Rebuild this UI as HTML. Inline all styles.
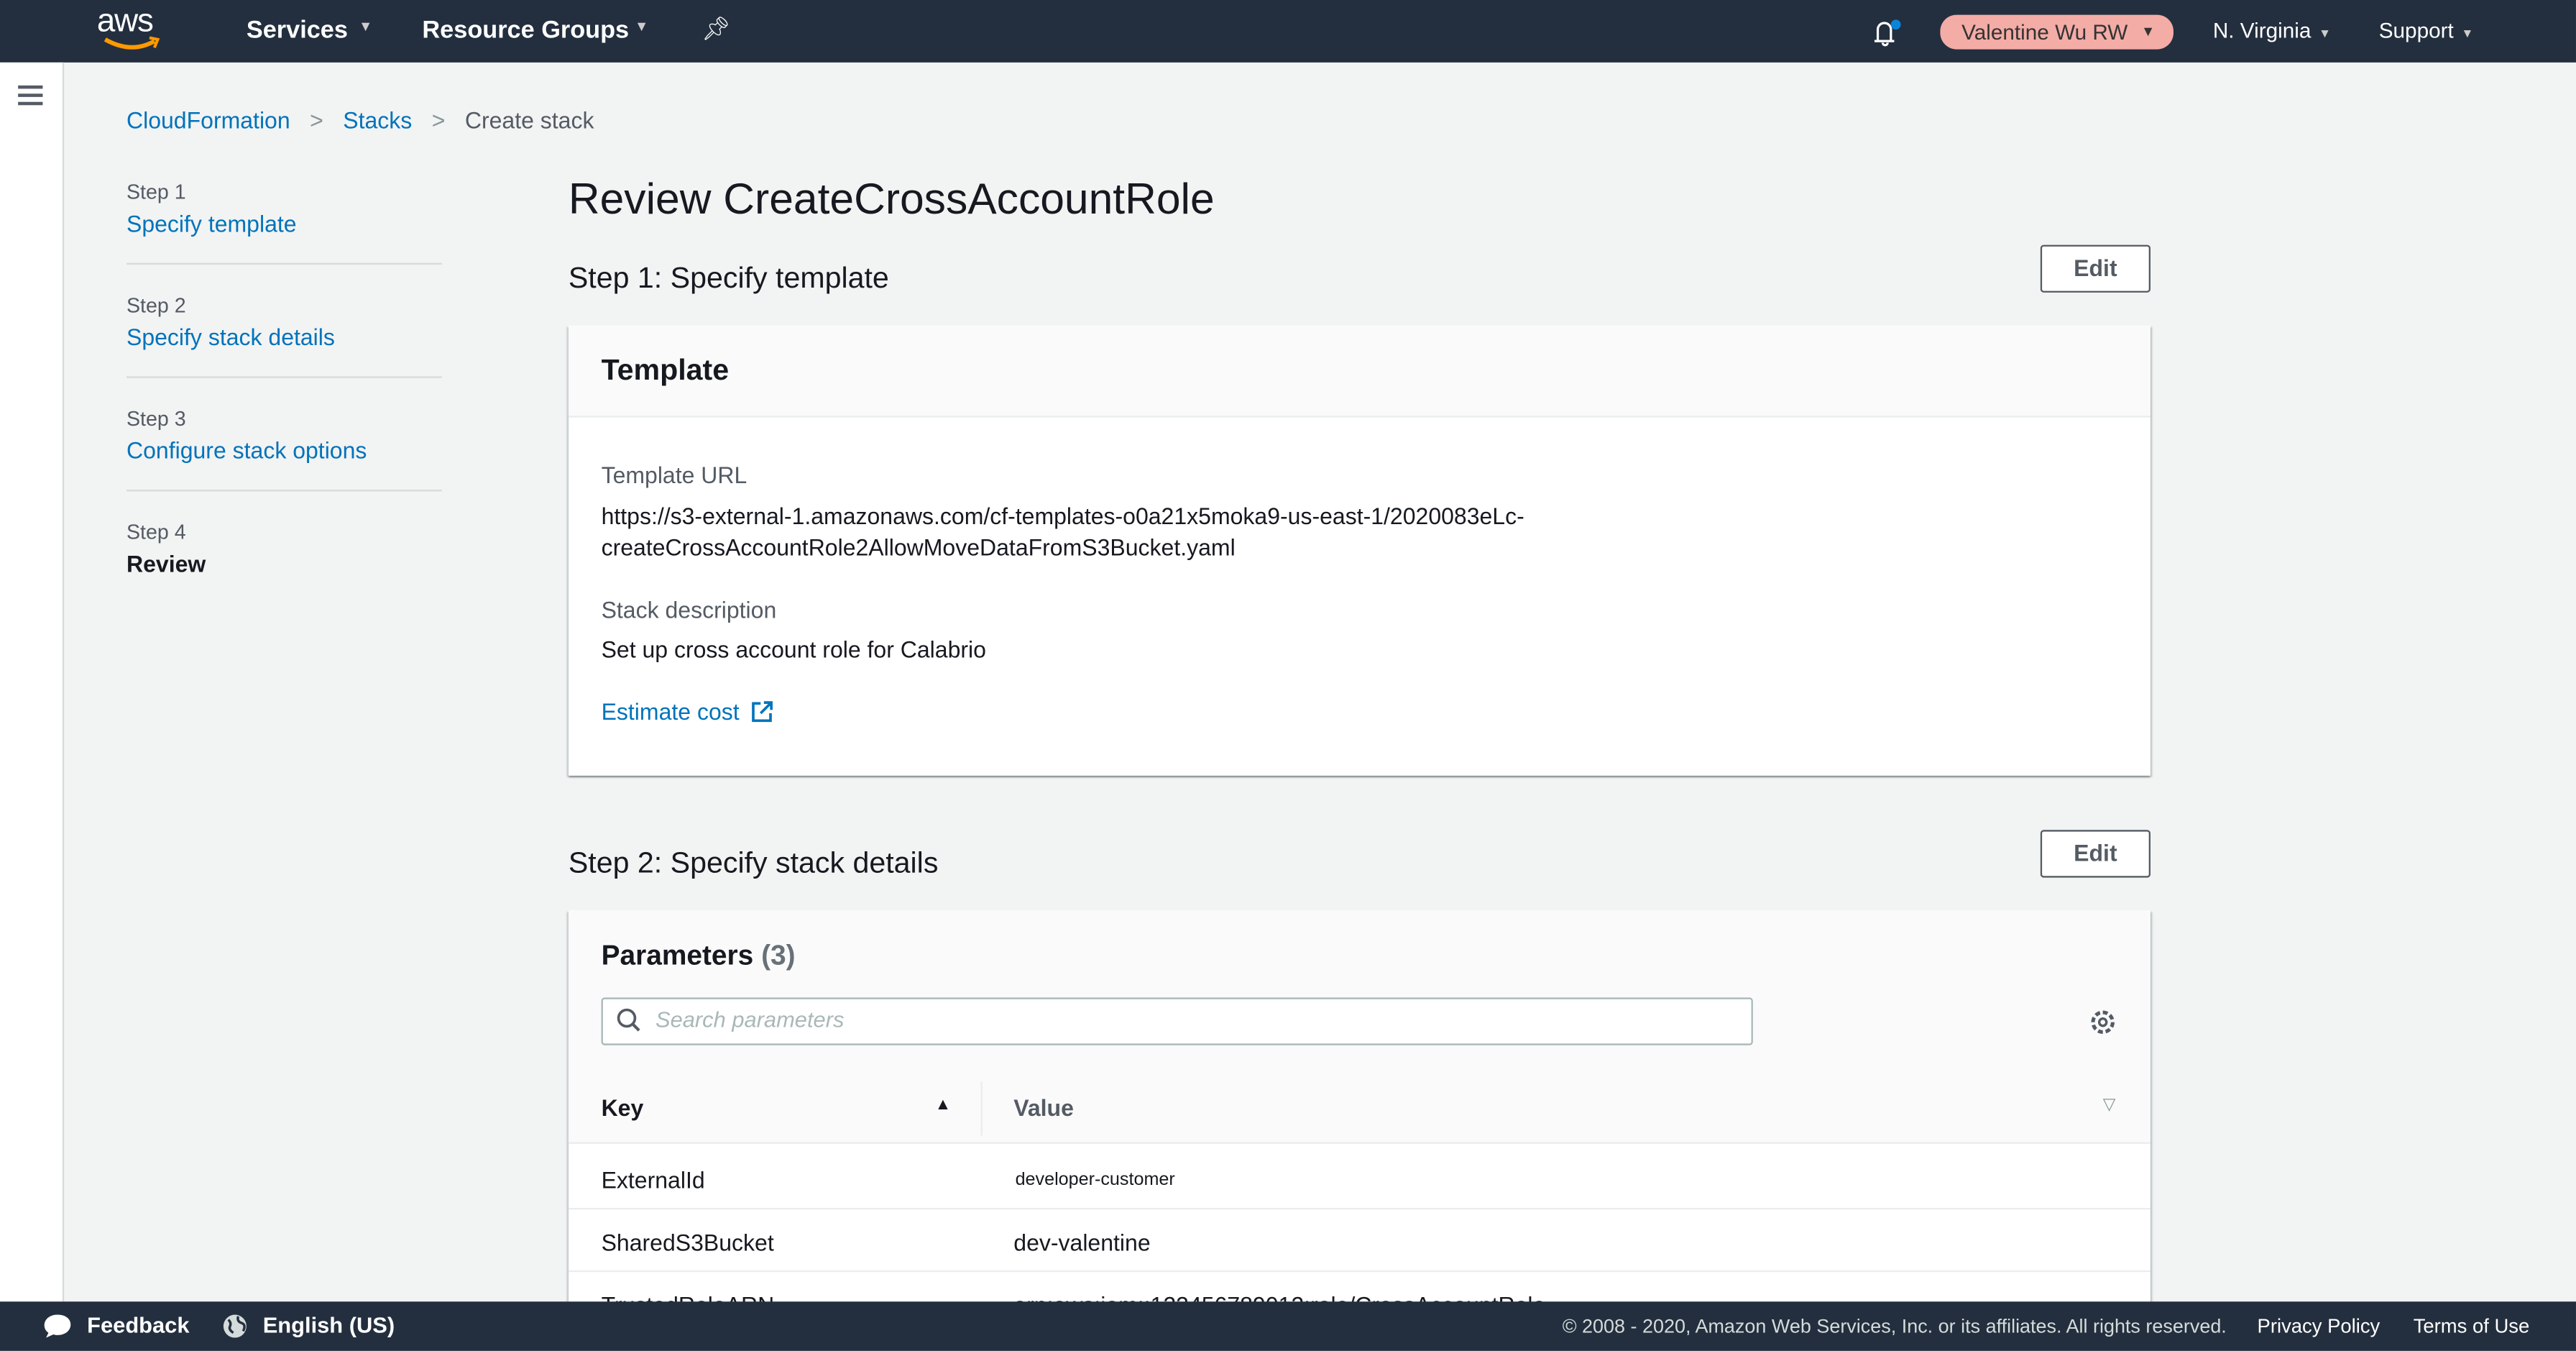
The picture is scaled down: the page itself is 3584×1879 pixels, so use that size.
<!DOCTYPE html>
<html><head><meta charset="utf-8"><style>
*{box-sizing:border-box;margin:0;padding:0}
html,body{width:3584px;height:1878px;overflow:hidden;background:#f2f3f3}
#w{position:absolute;left:0;top:0;width:1568px;height:822px;transform:scale(2.2857);transform-origin:0 0;font-family:"Liberation Sans",Arial,sans-serif;color:#16191f;font-size:14px;background:#f2f3f3}
.a{position:absolute;white-space:nowrap}
.nav{position:absolute;left:0;top:0;width:1568px;height:38px;background:#232f3e}
.nw{color:#fff;font-weight:bold;font-size:15px}
.side{position:absolute;left:0;top:38px;width:39px;height:754px;background:#fff;border-right:1px solid #d5dbdb}
.link{color:#0073bb}
.g{color:#545b64;font-size:12.5px}
.hr{position:absolute;left:77px;width:192px;height:1px;background:#d5dbdb}
.card{position:absolute;left:346px;width:963px;background:#fff;box-shadow:0 1px 1px rgba(0,28,36,.3),1px 1px 1px rgba(0,28,36,.15),-1px 1px 1px rgba(0,28,36,.15)}
.btn{position:absolute;left:1242px;width:67px;height:29px;border:1px solid #545b64;border-radius:2px;background:#fff;font-weight:bold;color:#545b64;text-align:center;line-height:27px}
.foot{position:absolute;left:0;top:792px;width:1568px;height:30px;background:#232f3e;color:#fff}
</style></head><body><div id="w">
<div class="nav">
 <div class="a" style="left:59px;top:2px;color:#fff;font-size:20px;letter-spacing:-0.5px">aws</div>
 <svg class="a" style="left:62px;top:21px" width="36" height="12"><path d="M2 3 Q18 12 32 4" stroke="#f90" stroke-width="2.6" fill="none"/><path d="M29 2 L34 3 L32 8" stroke="#f90" stroke-width="1.8" fill="none"/></svg>
 <div class="a nw" style="left:150px;top:10px">Services</div><div class="a" style="left:220px;top:11px;color:#ccc;font-size:10px">▾</div>
 <div class="a nw" style="left:257px;top:10px">Resource Groups</div><div class="a" style="left:388px;top:11px;color:#ccc;font-size:10px">▾</div>
 <div class="a" style="left:427px;top:9px;color:#fff;font-size:14px">📌︎</div>
 <svg class="a" style="left:1138px;top:10px" width="20" height="20"><path d="M3 15 h12 M5 15 V8 a4 4 0 0 1 8 0 V15 M8 16 a1.5 1.5 0 0 0 3 0" stroke="#fff" stroke-width="1.4" fill="none"/><circle cx="16" cy="5" r="3" fill="#0a84d8"/></svg>
 <div class="a" style="left:1181px;top:9px;width:142px;height:21px;border-radius:10px;background:#f4aca6;color:#333;font-size:13px;line-height:21px;padding-left:13px">Valentine Wu RW <span style="position:absolute;left:124px;font-size:10px">▾</span></div>
 <div class="a" style="left:1347px;top:11px;color:#fff;font-size:13px">N. Virginia <span style="font-size:9px;color:#ccc">&nbsp;▾</span></div>
 <div class="a" style="left:1448px;top:11px;color:#fff;font-size:13px">Support <span style="font-size:9px;color:#ccc">&nbsp;▾</span></div>
</div>
<div class="side"><div class="a" style="left:11px;top:14px;width:15px;height:2px;background:#545b64;box-shadow:0 5px 0 #545b64,0 10px 0 #545b64"></div></div>
<div class="a" style="left:77px;top:65px"><span class="link">CloudFormation</span><span style="color:#879596;margin:0 12px">&gt;</span><span class="link">Stacks</span><span style="color:#879596;margin:0 12px">&gt;</span><span style="color:#545b64">Create stack</span></div>
<div class="a g" style="left:77px;top:110px">Step 1</div><div class="a link" style="left:77px;top:128px">Specify template</div><div class="hr" style="top:160px"></div>
<div class="a g" style="left:77px;top:179px">Step 2</div><div class="a link" style="left:77px;top:197px">Specify stack details</div><div class="hr" style="top:229px"></div>
<div class="a g" style="left:77px;top:248px">Step 3</div><div class="a link" style="left:77px;top:266px">Configure stack options</div><div class="hr" style="top:298px"></div>
<div class="a g" style="left:77px;top:317px">Step 4</div><div class="a" style="left:77px;top:335px;font-weight:bold">Review</div>
<div class="a" style="left:346px;top:106px;font-size:26.5px">Review CreateCrossAccountRole</div>
<div class="a" style="left:346px;top:159px;font-size:18px">Step 1: Specify template</div>
<div class="btn" style="top:149px">Edit</div>
<div class="card" style="top:198px;height:274px">
 <div style="height:56px;background:#fafafa;border-bottom:1px solid #eaeded"></div>
 <div class="a" style="left:20px;top:17px;font-size:18px;font-weight:bold">Template</div>
 <div class="a" style="left:20px;top:83px;color:#545b64">Template URL</div>
 <div class="a" style="left:20px;top:107px;line-height:19px">https://s3-external-1.amazonaws.com/cf-templates-o0a21x5moka9-us-east-1/2020083eLc-<br>createCrossAccountRole2AllowMoveDataFromS3Bucket.yaml</div>
 <div class="a" style="left:20px;top:165px;color:#545b64">Stack description</div>
 <div class="a" style="left:20px;top:189px">Set up cross account role for Calabrio</div>
 <div class="a link" style="left:20px;top:227px">Estimate cost <svg width="14" height="14" style="vertical-align:-2px;margin-left:3px"><path d="M6 2H1.5v10.5H12V8 M8 1.5h4.5V6 M12.5 1.5 6 8" stroke="#0073bb" stroke-width="1.6" fill="none"/></svg></div>
</div>
<div class="a" style="left:346px;top:515px;font-size:18px">Step 2: Specify stack details</div>
<div class="btn" style="top:505px">Edit</div>
<div class="card" style="top:554px;height:240px">
 <div style="height:142px;background:#fafafa;border-bottom:1px solid #eaeded"></div>
 <div class="a" style="left:20px;top:18px;font-size:17px;font-weight:bold">Parameters <span style="color:#687078">(3)</span></div>
 <div class="a" style="left:20px;top:53px;width:701px;height:29px;border:1px solid #aab7b8;border-radius:2px;background:#fff"></div>
 <svg class="a" style="left:29px;top:59px" width="16" height="16"><circle cx="6.5" cy="6.5" r="5" stroke="#545b64" stroke-width="1.6" fill="none"/><path d="M10 10 14 14" stroke="#545b64" stroke-width="1.8"/></svg>
 <div class="a" style="left:53px;top:59px;color:#aab7b8;font-style:italic;font-size:13.5px">Search parameters</div>
 <svg class="a" style="left:924px;top:58px" width="20" height="20"><circle cx="10" cy="10" r="6" stroke="#545b64" stroke-width="2.2" fill="none" stroke-dasharray="3 1.7"/><circle cx="10" cy="10" r="2.2" stroke="#545b64" stroke-width="1.5" fill="none"/></svg>
 <div class="a" style="left:20px;top:112px;font-weight:bold">Key</div>
 <div class="a" style="left:223px;top:113px;font-size:10px">▲</div>
 <div class="a" style="left:251px;top:104px;width:1px;height:33px;background:#eaeded"></div>
 <div class="a" style="left:271px;top:112px;font-weight:bold;color:#545b64">Value</div>
 <div class="a" style="left:934px;top:113px;font-size:10px;color:#879596">▽</div>
 <div class="a" style="left:20px;top:156px">ExternalId</div>
 <div class="a" style="left:272px;top:158px;font-size:11px">developer-customer</div>
 <div class="a" style="left:0;top:181px;width:963px;height:1px;background:#eaeded"></div>
 <div class="a" style="left:20px;top:194px">SharedS3Bucket</div>
 <div class="a" style="left:271px;top:194px">dev-valentine</div>
 <div class="a" style="left:0;top:219px;width:963px;height:1px;background:#eaeded"></div>
 <div class="a" style="left:20px;top:232px">TrustedRoleARN</div>
 <div class="a" style="left:271px;top:232px">arn:aws:iam::123456789012:role/CrossAccountRole</div>
</div>
<div class="foot">
 <svg class="a" style="left:26px;top:7px" width="18" height="16"><path d="M9 1C4 1 1 4 1 7.5c0 2 1 3.5 2.5 4.5L2 15l4.5-2c1 .3 1.7.4 2.5.4 5 0 8-3 8-6.4S14 1 9 1z" fill="#fff"/></svg>
 <div class="a" style="left:53px;top:7px;font-weight:bold;font-size:13.5px">Feedback</div>
 <svg class="a" style="left:135px;top:7px" width="16" height="16"><circle cx="8" cy="8" r="7" fill="#d5dbdb"/><path d="M4 4q2 2 1 4t2 4M10 2q-1 3 2 4t1 5" stroke="#232f3e" stroke-width="1.5" fill="none"/></svg>
 <div class="a" style="left:160px;top:7px;font-weight:bold;font-size:13.5px">English (US)</div>
 <div class="a" style="left:951px;top:8px;font-size:11.8px;color:#d5dbdb">© 2008 - 2020, Amazon Web Services, Inc. or its affiliates. All rights reserved.</div>
 <div class="a" style="left:1374px;top:8px;font-size:12px">Privacy Policy</div>
 <div class="a" style="left:1469px;top:8px;font-size:12px">Terms of Use</div>
</div>
</div></body></html>
